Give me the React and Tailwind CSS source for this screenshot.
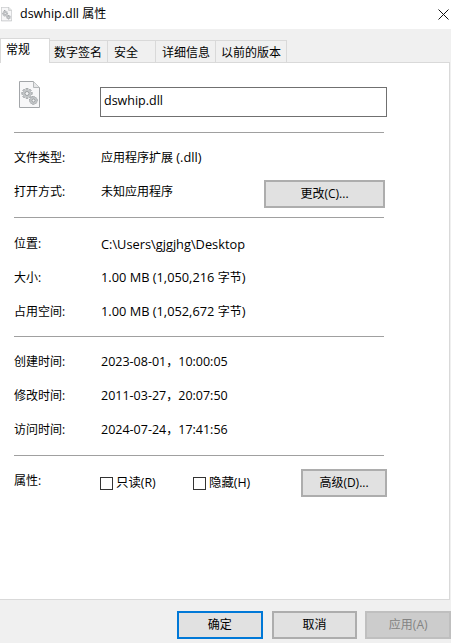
const FONT = '"Open Sans", "Noto Sans CJK SC", sans-serif';

function Gear({ cx, cy, r }) {
  const teeth = [0, 45, 90, 135];
  return (
    <g>
      {teeth.map((a) => (
        <rect key={a} x={cx - r * 0.26} y={cy - r * 1.3} width={r * 0.52} height={r * 2.6} fill="#b9bcbf" stroke="#8f9396" strokeWidth="0.5" transform={`rotate(${a} ${cx} ${cy})`} />
      ))}
      <circle cx={cx} cy={cy} r={r} fill="#c4c7c9" />
      <circle cx={cx} cy={cy} r={r * 0.5} fill="#f2f3f4" stroke="#85898c" strokeWidth="0.7" />
    </g>
  );
}

function FileIcon({ size }) {
  return (
    <svg width={size} height={size * 1.286} viewBox="0 0 21 27" className="block">
      <path d="M0.5 0.5H14.5L20.5 6.5V26.5H0.5Z" fill="#f7f7f8" stroke="#a3a6a9" />
      <path d="M14.5 0.5V6.5H20.5" fill="#e6e7e8" stroke="#b5b8ba" />
      <Gear cx={8} cy={12.5} r={4} />
      <Gear cx={14.5} cy={19.5} r={3} />
    </svg>
  );
}

function Tab({ width, active, left = 6, children }) {
  return (
    <div
      className={
        active
          ? 'h-[25px] bg-white border border-b-0 border-[#d9d9d9] -mb-px z-10 pl-[5px] pt-[3px] text-[12px] leading-[16px]'
          : 'h-[22px] bg-[#f0f0f0] border border-l-0 border-b-0 border-[#d9d9d9] flex items-center text-[12px] leading-[16px] pt-[2px]'
      }
      style={{ width, paddingLeft: active ? undefined : left }}
    >
      {children}
    </div>
  );
}

function Row({ label, value, children }) {
  return (
    <div className="h-[34px] flex items-center pl-[14px]">
      <div className="w-[87px] pt-[2px]">{label}</div>
      <div className="flex-1 pt-px text-[12.8px]">{value}</div>
      {children}
    </div>
  );
}

function Cjk({ children }) {
  return <span className="text-[12px]">{children}</span>;
}

function Sep() {
  return <div className="ml-[14px] w-[370px] h-px bg-[#a0a0a0]" />;
}

function Button({ className, children }) {
  return (
    <div className={`flex items-center justify-center border-2 bg-[#e1e1e1] border-[#adadad] text-[12px] ${className}`}>
      {children}
    </div>
  );
}

function Check({ label, className }) {
  return (
    <div className={`flex items-center ${className}`}>
      <div className="w-[13px] h-[13px] border border-[#333333] bg-white mr-[3px]" />
      <span className="text-[12.4px]">{label}</span>
    </div>
  );
}

export default function App() {
  return (
    <div className="w-[451px] h-[643px] bg-[#f0f0f0] text-[12px] leading-[16px] text-black flex flex-col overflow-hidden" style={{ fontFamily: FONT }}>
      <div className="h-[29px] bg-white flex items-center pl-[1px] shrink-0">
        <FileIcon size={11} />
        <span className="ml-[8px] text-[12.5px] leading-[20px] text-black -mt-[1px]">dswhip.dll <span className="text-[12px]">属性</span></span>
        <svg width="11" height="11" viewBox="0 0 11 11" className="ml-auto mr-[2px]">
          <path d="M0.5 0.5L10.5 10.5M10.5 0.5L0.5 10.5" stroke="#111" strokeWidth="1" fill="none" />
        </svg>
      </div>

      <div className="h-[33px] flex items-end shrink-0 relative">
        <Tab width={50} active>常规</Tab>
        <Tab width={58} left={4}>数字签名</Tab>
        <Tab width={48}>安全</Tab>
        <Tab width={60}>详细信息</Tab>
        <Tab width={71} left={5}>以前的版本</Tab>
      </div>

      <div className="h-[538px] w-[450px] bg-white border-t border-r border-b border-[#d9d9d9] shrink-0">
        <div className="h-[69px] flex pl-[19px]">
          <div className="pt-[18px] w-[81px]">
            <FileIcon size={21} />
          </div>
          <div className="mt-[24px] w-[287px] h-[30px] border border-[#707070] flex items-center pl-[3px] pb-[3px] text-[12.5px]">dswhip.dll</div>
        </div>
        <Sep />
        <div className="h-[84px] pt-[7px]">
          <Row label="文件类型:" value={<><Cjk>应用程序扩展</Cjk> (.dll)</>} />
          <Row label="打开方式:" value={<Cjk>未知应用程序</Cjk>}>
            <Button className="w-[121px] h-[28px] mr-[64px] mt-[6px]">更改(C)...</Button>
          </Row>
        </div>
        <Sep />
        <div className="h-[118px] pt-[8px]">
          <Row label="位置:" value="C:\Users\gjgjhg\Desktop" />
          <Row label="大小:" value={<>1.00 MB (1,050,216 <Cjk>字节</Cjk>)</>} />
          <Row label="占用空间:" value={<>1.00 MB (1,052,672 <Cjk>字节</Cjk>)</>} />
        </div>
        <Sep />
        <div className="h-[118px] pt-[7px]">
          <Row label="创建时间:" value={<span className="text-[12.5px]">2023-08-01<Cjk>，</Cjk>10:00:05</span>} />
          <Row label="修改时间:" value={<span className="text-[12.5px]">2011-03-27<Cjk>，</Cjk>20:07:50</span>} />
          <Row label="访问时间:" value={<span className="text-[12.5px]">2024-07-24<Cjk>，</Cjk>17:41:56</span>} />
        </div>
        <Sep />
        <div className="flex items-start pl-[14px] pt-[13px]">
          <div className="w-[86px] mt-[4px]">属性:</div>
          <Check label="只读(R)" className="w-[93px] h-[28px]" />
          <Check label="隐藏(H)" className="w-[108px] h-[28px]" />
          <Button className="w-[86px] h-[28px]">高级(D)...</Button>
        </div>
      </div>

      <div className="flex pl-[177px] pt-[11px] gap-[8px]">
        <Button className="w-[86px] h-[28px] !border-[#0078d7]">确定</Button>
        <Button className="w-[86px] h-[28px] ml-px">取消</Button>
        <Button className="w-[86px] h-[28px] !bg-[#cccccc] !border-[#bfbfbf] text-[#838383]">应用(A)</Button>
      </div>
    </div>
  );
}
